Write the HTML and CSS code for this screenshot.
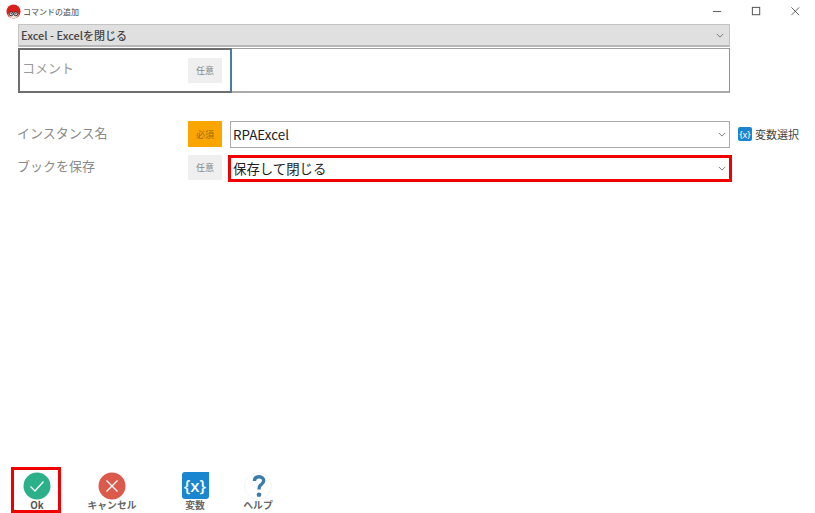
FILE: index.html
```html
<!DOCTYPE html>
<html lang="ja">
<head>
<meta charset="utf-8">
<title>コマンドの追加</title>
<link rel="stylesheet" href="styles.css">
</head>
<body>
<div class="window">
  <header class="titlebar">
    <svg class="app-icon" viewBox="0 0 16 16" aria-hidden="true">
      <circle cx="8" cy="8" r="7.5" fill="#d8201f"/>
      <path d="M2.5 11.5C3 8.5 5 8 8 9.2 11 8 13 8.500 13.500 11.500 12 14.500 10 15.500 8 15.500S4 14.500 2.500 11.500Z" fill="#f4e6dc"/>
      <circle cx="5.500" cy="10.500" r="2.100" fill="#fff" stroke="#222" stroke-width="1"/>
      <circle cx="10.500" cy="10.500" r="2.100" fill="#fff" stroke="#222" stroke-width="1"/>
      <circle cx="5.500" cy="10.500" r=".8" fill="#222"/>
      <circle cx="10.500" cy="10.500" r=".8" fill="#222"/>
    </svg>
    <span class="title-text">コマンドの追加</span>
    <div class="win-controls">
      <svg class="win-btn" viewBox="0 0 12 12" aria-hidden="true"><path d="M1 6H10" stroke="#666" stroke-width="1.200"/></svg>
      <svg class="win-btn" viewBox="0 0 12 12" aria-hidden="true"><rect x="1.500" y="1.500" width="8" height="8" fill="none" stroke="#555" stroke-width="1.100"/></svg>
      <svg class="win-btn" viewBox="0 0 12 12" aria-hidden="true"><path d="M1.500 1.500L10 10M10 1.500L1.500 10" stroke="#555" stroke-width="1"/></svg>
    </div>
  </header>

  <main class="content">
    <div class="command-bar">
      <span>Excel - Excelを閉じる</span>
      <svg class="chevron" viewBox="0 0 10 6" aria-hidden="true"><path d="M1 1L5 5L9 1" fill="none" stroke="#777" stroke-width="1.200"/></svg>
    </div>

    <div class="comment-row">
      <div class="comment-label">
        <span class="comment-text">コメント</span>
        <span class="badge optional comment-badge">任意</span>
      </div>
      <div class="comment-input"></div>
    </div>

    <div class="param-row first-param">
      <span class="param-label">インスタンス名</span>
      <span class="badge required">必須</span>
      <div class="select">
        <span>RPAExcel</span>
        <svg class="chevron" viewBox="0 0 10 6" aria-hidden="true"><path d="M1 1L5 5L9 1" fill="none" stroke="#777" stroke-width="1.200"/></svg>
      </div>
      <div class="var-select">
        <span class="var-mini">{x}</span>
        <span>変数選択</span>
      </div>
    </div>

    <div class="param-row second-param">
      <span class="param-label">ブックを保存</span>
      <span class="badge optional">任意</span>
      <div class="select highlighted">
        <span>保存して閉じる</span>
        <svg class="chevron" viewBox="0 0 10 6" aria-hidden="true"><path d="M1 1L5 5L9 1" fill="none" stroke="#777" stroke-width="1.200"/></svg>
      </div>
    </div>
  </main>

  <footer class="actions">
    <div class="action ok">
      <svg class="action-icon" viewBox="0 0 28 28" aria-hidden="true">
        <circle cx="14" cy="14" r="13.500" fill="#2bb08a"/>
        <path d="M7.500 14.500L12 19L20.500 9.500" fill="none" stroke="#fff" stroke-width="1.300"/>
      </svg>
      <span>Ok</span>
    </div>
    <div class="action cancel">
      <svg class="action-icon" viewBox="0 0 28 28" aria-hidden="true">
        <circle cx="14" cy="14" r="13.500" fill="#dc5a4c"/>
        <path d="M8.500 8.500L19.500 19.500M19.500 8.500L8.500 19.500" stroke="#fff" stroke-width="1.300"/>
      </svg>
      <span>キャンセル</span>
    </div>
    <div class="action variable">
      <div class="var-tile">{x}</div>
      <span>変数</span>
    </div>
    <div class="action help">
      <svg class="action-icon" viewBox="0 0 28 28" aria-hidden="true">
        <circle cx="14" cy="14" r="13.500" fill="#fff" stroke="#eef5fa"/>
        <path d="M10.500 9C10.500 5.800 12.500 4.700 15 4.700C18 4.700 19.700 6.500 19.700 8.800C19.700 11 18 12 16.500 13.200C15.300 14.200 15 15.200 15 17.500" fill="none" stroke="#3c7cab" stroke-width="3.400"/>
        <circle cx="15" cy="22.800" r="2.300" fill="#3c7cab"/>
      </svg>
      <span>ヘルプ</span>
    </div>
  </footer>
</div>
</body>
</html>
```

FILE: styles.css
```css
* { box-sizing: border-box; }

html, body {
  margin: 0;
  height: 100%;
  background: #fff;
}

body {
  font-family: "Noto Sans CJK JP", "Noto Sans", sans-serif;
  color: #333;
}

.window {
  display: flex;
  flex-direction: column;
  height: 513px;
  overflow: hidden;
}

.titlebar {
  display: flex;
  align-items: center;
  height: 24px;
  padding: 0 14px 2px 6px;
  flex: none;
}

.app-icon { width: 15px; height: 15px; flex: none; }

.title-text {
  margin-left: 2px;
  font-size: 8px;
  color: #444;
}

.win-controls {
  display: flex;
  gap: 28px;
  margin-left: auto;
}

.win-btn { width: 11px; height: 11px; }

.content {
  display: flex;
  flex-direction: column;
  padding: 0 0 0 18px;
  flex: 1;
}

.command-bar {
  display: flex;
  align-items: center;
  justify-content: space-between;
  width: 712px;
  height: 23px;
  padding: 0 3px 0 2px;
  background: #e0e0e0;
  border: 1px solid #c4c4c4;
  border-bottom: 2px solid #b8b8b8;
  font-size: 11px;
  font-weight: 500;
  color: #444;
}

.chevron { width: 8px; height: 5px; margin-right: 2px; flex: none; }

.comment-row {
  display: flex;
  width: 712px;
  height: 45px;
  margin-top: 1px;
}

.comment-label {
  display: flex;
  align-items: flex-start;
  justify-content: space-between;
  width: 214px;
  padding: 9px 8px 0 2px;
  border: 2px solid #6e6e6e;
  border-right-color: #4a7ba8;
}

.comment-text {
  font-size: 13px;
  line-height: 18px;
  color: #999;
}

.comment-badge { margin-top: -1px; }

.comment-input {
  flex: 1;
  border-top: 1px solid #a0a0a0;
  border-right: 1px solid #5aa0dc;
  border-bottom: 2px solid #aaa;
}

.param-row {
  display: flex;
  align-items: flex-start;
}

.first-param { margin-top: 28px; }
.second-param { margin-top: 7px; }

.param-label {
  width: 171px;
  margin-left: -1px;
  font-size: 13px;
  line-height: 22px;
  color: #8a8a8a;
}

.first-param .param-label { margin-top: 1px; }

.badge {
  display: flex;
  align-items: center;
  justify-content: center;
  width: 34px;
  height: 25px;
  font-size: 9px;
  color: #888;
  flex: none;
}

.required { background: #fba600; color: #9a6a10; height: 26px; }
.optional { background: #efefef; }

.select {
  display: flex;
  align-items: center;
  justify-content: space-between;
  width: 500px;
  height: 27px;
  margin-left: 8px;
  padding: 0 1px 2px 2px;
  border: 1px solid #aaa;
  font-size: 13.400px;
  font-weight: 400;
  color: #222;
}

.select.highlighted {
  width: 504px;
  height: 27px;
  margin-left: 6px;
  padding: 0 1px 2px 2px;
  border: 3px solid #f00000;
}

.select .chevron { margin-top: 2px; }

.var-select {
  display: flex;
  align-items: center;
  gap: 3px;
  margin-left: 8px;
  margin-top: 5px;
  font-size: 11px;
  color: #444;
  white-space: nowrap;
}

.var-mini {
  display: flex;
  align-items: center;
  justify-content: center;
  width: 14px;
  height: 14px;
  background: #1a86d0;
  border-radius: 2px;
  font-family: "Noto Sans", sans-serif;
  font-size: 9px;
  line-height: 1;
  color: #fff;
  flex: none;
}

.actions {
  display: flex;
  align-items: flex-start;
  height: 46px;
  padding-left: 11px;
  flex: none;
}

.action {
  display: flex;
  flex-direction: column;
  align-items: center;
  font-size: 9.800px;
  font-weight: 700;
  line-height: 11px;
  color: #666;
  white-space: nowrap;
}

.ok {
  width: 50px;
  height: 46px;
  padding: 2px 0 0 2px;
  border: 3px solid #f00000;
  color: #555;
}

.cancel { width: 52px; margin-left: 25px; padding-top: 5px; }
.variable { width: 28px; margin-left: 43px; padding-top: 5px; }
.help { width: 28px; margin-left: 35px; padding-top: 5px; }

.action-icon { width: 28px; height: 28px; flex: none; }

.var-tile {
  display: flex;
  align-items: center;
  justify-content: center;
  width: 27px;
  height: 27px;
  margin-bottom: 1px;
  background: #1a86d0;
  border-radius: 3px 0 3px 3px;
  font-family: "Noto Sans", sans-serif;
  font-size: 17px;
  font-weight: 500;
  line-height: 1;
  color: #fff;
}
```
